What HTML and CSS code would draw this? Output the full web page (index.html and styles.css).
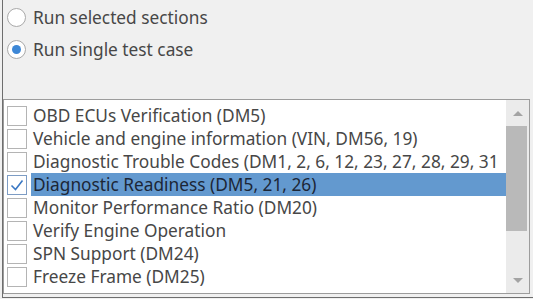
FILE: index.html
```html
<!DOCTYPE html>
<html lang="en">

<head>
    <meta charset="UTF-8">
    <meta name="viewport" content="width=device-width, initial-scale=1.0">
    <title>Test Selection</title>
    <link rel="stylesheet" href="styles.css">
</head>

<body>
    <div class="panel">
        <div class="modes">
            <label class="mode">
                <span class="radio"></span>
                <span class="mode-text">Run selected sections</span>
            </label>
            <label class="mode">
                <span class="radio checked"></span>
                <span class="mode-text">Run single test case</span>
            </label>
        </div>

        <div class="listbox">
            <ul class="items">
                <li class="item"><span class="check"></span><span class="item-text">OBD ECUs Verification (DM5)</span></li>
                <li class="item"><span class="check"></span><span class="item-text">Vehicle and engine information (VIN, DM56, 19)</span></li>
                <li class="item"><span class="check"></span><span class="item-text">Diagnostic Trouble Codes (DM1, 2, 6, 12, 23, 27, 28, 29, 31</span></li>
                <li class="item selected">
                    <span class="check checked">
                        <svg viewBox="0 0 20 20" width="20" height="20">
                            <path d="M4.5 10.5 L8.5 14.5 L15.5 5.5" fill="none" stroke="#3a78c4" stroke-width="1.6" />
                        </svg>
                    </span>
                    <span class="item-text">Diagnostic Readiness (DM5, 21, 26)</span>
                </li>
                <li class="item"><span class="check"></span><span class="item-text">Monitor Performance Ratio (DM20)</span></li>
                <li class="item"><span class="check"></span><span class="item-text">Verify Engine Operation</span></li>
                <li class="item"><span class="check"></span><span class="item-text">SPN Support (DM24)</span></li>
                <li class="item"><span class="check"></span><span class="item-text">Freeze Frame (DM25)</span></li>
            </ul>

            <div class="scrollbar">
                <div class="arrow up"></div>
                <div class="track">
                    <div class="thumb"></div>
                </div>
                <div class="arrow down"></div>
            </div>
        </div>
    </div>
</body>

</html>
```

FILE: styles.css
```css
body {
    margin: 0;
    background-color: #f0f0f0;
    font-family: "Noto Sans", "Open Sans", sans-serif;
    font-size: 17.3px;
    color: #474747;
}

.panel {
    margin-left: 2px;
    height: 297px;
    border-left: 1px solid #6e6e6e;
    border-bottom: 1px solid #6e6e6e;
    display: flex;
    flex-direction: column;
}

/* radio buttons on top */
.modes {
    height: 99px;
    flex: none;
    padding-top: 1px;
    padding-left: 4px;
    box-sizing: border-box;
}

.mode {
    display: flex;
    align-items: center;
    height: 32px;
}

.radio {
    width: 17px;
    height: 17px;
    border: 1px solid #a9a9a9;
    border-radius: 50%;
    background-color: #ffffff;
    display: flex;
    align-items: center;
    justify-content: center;
    margin-right: 7px;
}

.radio.checked::after {
    content: "";
    width: 9px;
    height: 9px;
    border-radius: 50%;
    background-color: #3d87d6;
}

/* list of test cases */
.listbox {
    height: 195px;
    width: 527px;
    flex: none;
    box-sizing: border-box;
    border: 1px solid #9c9c9c;
    background-color: #ffffff;
    display: flex;
}

.items {
    list-style: none;
    margin: 0;
    padding: 4px 0 0 3px;
    flex: 1;
    min-width: 0;
    overflow: hidden;
}

.item {
    display: flex;
    align-items: center;
    height: 23px;
}

.check {
    flex: none;
    width: 18px;
    height: 18px;
    border: 1px solid #b4b4b4;
    background-color: #ffffff;
    margin-right: 4px;
    position: relative;
}

.check svg {
    position: absolute;
    left: -1px;
    top: -1px;
}

.check.checked {
    border-color: #7d9cc4;
}

.item-text {
    flex: 1;
    height: 23px;
    line-height: 24px;
    padding-left: 2px;
    white-space: nowrap;
    overflow: hidden;
}

.selected .item-text {
    background-color: #6399cf;
    color: #1c2636;
}

/* scrollbar */
.scrollbar {
    width: 23px;
    flex: none;
    background-color: #ebebeb;
    display: flex;
    flex-direction: column;
}

.arrow {
    height: 26px;
    display: flex;
    align-items: center;
    justify-content: center;
}

.arrow.up::after {
    content: "";
    border-left: 5px solid transparent;
    border-right: 5px solid transparent;
    border-bottom: 5px solid #a3a3a3;
}

.arrow.down::after {
    content: "";
    border-left: 5px solid transparent;
    border-right: 5px solid transparent;
    border-top: 5px solid #a3a3a3;
}

.track {
    flex: 1;
    padding-right: 2px;
}

.thumb {
    height: 105px;
    background-color: #b9b9b9;
}
```
